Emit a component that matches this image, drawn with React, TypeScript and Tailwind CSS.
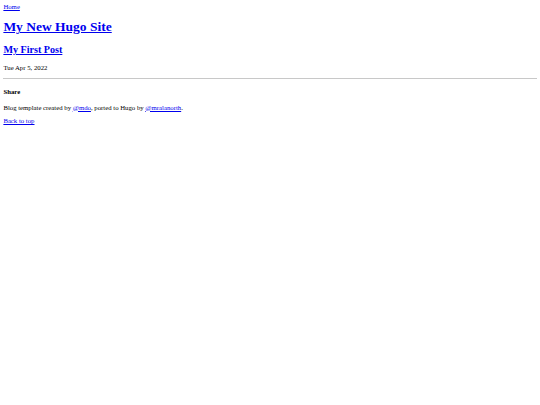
export default function App() {
  return (
    <div className="min-h-screen bg-white text-black m-0 p-[3.375px] font-['Liberation_Serif',serif] text-[6.75px] leading-[normal]">
      <header>
        <nav>
          <a href="#" className="text-[#0000ee] underline">
            Home
          </a>
        </nav>
        <h1 className="text-[13.5px] font-bold my-[9.045px]">
          <a href="#" className="text-[#0000ee] underline">
            My New Hugo Site
          </a>
        </h1>
      </header>

      <main>
        <article>
          <h2 className="text-[10.125px] font-bold my-[8.4px]">
            <a href="#" className="text-[#0000ee] underline">
              My First Post
            </a>
          </h2>
          <p className="my-[6.75px]">Tue Apr 5, 2022</p>
        </article>
      </main>

      <hr className="my-[3.375px] border-0 border-t border-[#c8c8c8]" />

      <footer>
        <h4 className="font-bold my-[8.98px]">Share</h4>
        <p className="my-[6.75px]">
          Blog template created by{" "}
          <a href="#" className="text-[#0000ee] underline">
            @mdo
          </a>
          , ported to Hugo by{" "}
          <a href="#" className="text-[#0000ee] underline">
            @mralanorth
          </a>
          .
        </p>
        <a href="#" className="text-[#0000ee] underline">
          Back to top
        </a>
      </footer>
    </div>
  );
}
